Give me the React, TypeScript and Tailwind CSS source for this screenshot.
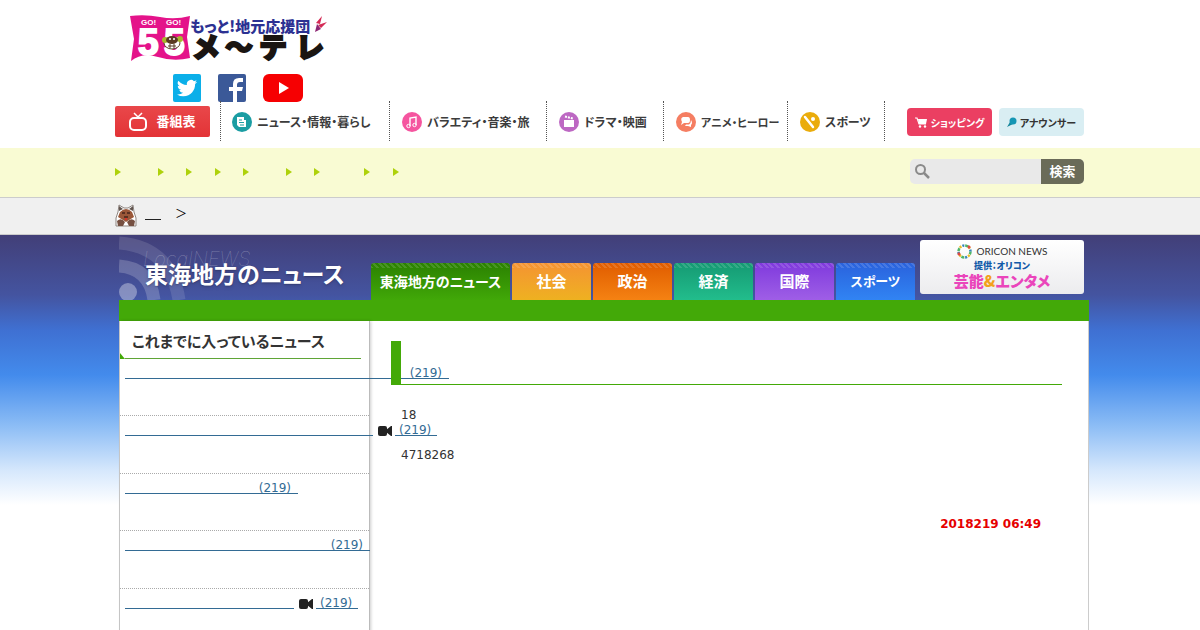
import { Fragment } from "react";

const tabs = [
  { label: "社会", className: "text-[15px] bg-linear-to-b from-[#f49331] to-[#eeb120]" },
  { label: "政治", className: "text-[15px] bg-linear-to-b from-[#e05c00] to-[#f58212]" },
  { label: "経済", className: "text-[15px] bg-linear-to-b from-[#159a73] to-[#22bd8c]" },
  { label: "国際", className: "text-[15px] bg-linear-to-b from-[#8039dd] to-[#9f5ee6]" },
  { label: "スポーツ", className: "text-[13px] bg-linear-to-b from-[#2a62dd] to-[#3184f3]" },
];

const arrows = [
  "w-[43px]",
  "w-[28px]",
  "w-[29px]",
  "w-[28px]",
  "w-[43px]",
  "w-[28px]",
  "w-[50px]",
  "w-[29px]",
  "w-[28px]",
];

const news = [
  { line: "w-[324px]", video: false },
  { line: "w-[248px]", video: true },
  { line: "w-[173px]", video: false },
  { line: "w-[245px]", video: false },
  { line: "w-[169px]", video: true },
];

function Logo() {
  return (
    <svg width="200" height="46" viewBox="0 0 200 46" className="overflow-visible" aria-label="メ〜テレ">
      <path d="M0 1 Q15 -1 30 2 T60 1 L57 22 L60 43 Q44 47 28 42 T1 46 L4 24 Z" fill="#e4138a" />
      <g fontFamily="Liberation Sans, sans-serif" fontWeight="bold" fill="#fff">
        <g fontSize="37" stroke="#fff" strokeWidth="2">
          <text x="8" y="40">5</text>
          <text x="34" y="40">5</text>
        </g>
        <text x="11" y="10" fontSize="8">GO!</text>
        <text x="36" y="10" fontSize="8">GO!</text>
      </g>
      <ellipse cx="42" cy="28" rx="8" ry="6" fill="#fff" stroke="#5b4025" />
      <circle cx="35" cy="25" r="3" fill="#a9b52d" />
      <circle cx="50" cy="24" r="3" fill="#a9b52d" />
      <ellipse cx="42" cy="25" rx="6" ry="4" fill="#5b3a22" />
      <circle cx="40" cy="24" r="1" fill="#fff" />
      <circle cx="44" cy="24" r="1" fill="#fff" />
      <path d="M38 31 h8 M40 29 v4 M44 29 v4" stroke="#5b3a22" />
      <g fontWeight="900" style={{ fontFamily: "'Noto Sans CJK JP', sans-serif" }}>
        <text x="60" y="17" fontSize="15" fill="#2c3192">
          もっと!地元応援団
        </text>
        <g fontSize="28" fill="#1a1512" stroke="#1a1512" strokeWidth="2" style={{ fontFeatureSettings: "normal" }}>
          <text x="62" y="43">メ</text>
          <text x="95" y="43">〜</text>
          <text x="129" y="43">テ</text>
          <text x="166" y="43">レ</text>
        </g>
      </g>
      <path d="M186 8 L192 1 L190 9 Z M188 10 L197 7 L191 13 Z" fill="#d42a55" />
      <path d="M185 17 L187 9 L191 14 Z" fill="#8d2673" />
    </svg>
  );
}

function Mascot() {
  return (
    <svg width="22" height="23" viewBox="0 0 22 23" aria-hidden="true">
      <path d="M3 8 L4 1 L9 4 H13 L18 1 L19 8 L21 14 V22 H1 V14 Z" fill="#fff" stroke="#8e8580" />
      <path d="M4 2 L8 5 L4 7 Z M18 2 L14 5 L18 7 Z" fill="#625650" />
      <path d="M5 8 Q11 2 17 8 L19 13 L14 16 L11 18 L8 16 L3 13 Z" fill="#9a5738" />
      <path d="M7 9 h3 M12 9 h3 M9 13 h4" stroke="#46251b" strokeWidth="1.5" />
      <path d="M2 17 Q6 13 10 18 L8 22 H3 Z M20 17 Q16 13 12 18 L14 22 H19 Z" fill="#765041" />
      <path d="M10 14 h2 v2 h-2 Z" fill="#d8342a" />
    </svg>
  );
}

function CategoryIcon({ name }: { name: string }) {
  return (
    <svg width="20" height="20" viewBox="0 0 20 20" className="shrink-0" aria-hidden="true">
      {name === "news" && (
        <>
          <circle cx="10" cy="10" r="10" fill="#1b9da3" />
          <path d="M5 5 H12 V8 H14 V15 H7 L5 13 Z" fill="#fff" />
          <path d="M7 8 h3 M7 10.5 h5 M8 13 h4" stroke="#1b9da3" />
        </>
      )}
      {name === "variety" && (
        <>
          <circle cx="10" cy="10" r="10" fill="#f5559f" />
          <path d="M8 14 V6 L14 5 V13" fill="none" stroke="#fff" strokeWidth="1.4" />
          <circle cx="6.5" cy="14" r="1.7" fill="none" stroke="#fff" />
          <circle cx="12.5" cy="13" r="1.7" fill="none" stroke="#fff" />
        </>
      )}
      {name === "drama" && (
        <>
          <circle cx="10" cy="10" r="10" fill="#bd68c3" />
          <path d="M5 8 H15 V15 H5 Z" fill="#fff" />
          <path d="M6 4.5 L14 6.5" stroke="#fff" strokeWidth="2" strokeDasharray="2 1" />
        </>
      )}
      {name === "anime" && (
        <>
          <circle cx="10" cy="10" r="10" fill="#f57e62" />
          <path d="M7 5 H12 Q14 5 14 8 Q14 11 12 11 H8 L5 13 L6 10 Q4 6 7 5 Z" fill="#fff" />
          <path d="M15 8 Q17 11 15 13 L15 15 L12 14 H9 L10 12.5 H13 Q15 11 15 8 Z" fill="#fff" />
        </>
      )}
      {name === "sports" && (
        <>
          <circle cx="10" cy="10" r="10" fill="#eaac0c" />
          <path d="M5 5 L13 15" stroke="#fff" strokeWidth="2.5" strokeLinecap="round" />
          <circle cx="13" cy="7" r="2" fill="#fff" />
        </>
      )}
    </svg>
  );
}

function NavItem({ icon, label, className }: { icon: string; label: string; className: string }) {
  return (
    <a
      href="#"
      className={`flex h-10 items-center gap-[5px] border-l border-dotted border-[#555] pt-[2px] font-bold whitespace-nowrap text-[#3c3c3c] ${className}`}
    >
      <CategoryIcon name={icon} />
      {label}
    </a>
  );
}

function VideoIcon() {
  return (
    <svg width="14" height="10" viewBox="0 0 14 10" className="mr-[3px] ml-[5px] block shrink-0" aria-hidden="true">
      <rect width="9" height="10" rx="2" fill="#222" />
      <path d="M8 4 L13 0 H14 V10 H13 L8 6 Z" fill="#222" />
    </svg>
  );
}

function Header() {
  return (
    <header className="mx-auto w-full max-w-[970px] pt-[15px] pb-[7px]">
      <a href="#" className="block pl-[15px]">
        <Logo />
      </a>
      <div className="mt-[13px] flex h-7 pl-[58px]">
        <a href="#" aria-label="Twitter" className="mr-[17px]">
          <svg width="28" height="28" viewBox="0 0 28 28">
            <rect width="28" height="28" rx="2" fill="#0bafe9" />
            <path
              transform="translate(4 4) scale(.84)"
              fill="#fff"
              d="M23.95 4.57a10 10 0 01-2.820.770 4.960 4.960 0 002.160-2.720c-.950.560-2 .960-3.130 1.180a4.920 4.920 0 00-8.380 4.480A13.930 13.930 0 011.640 3.160a4.920 4.920 0 001.520 6.570 4.900 4.900 0 01-2.230-.610v.060a4.920 4.920 0 003.950 4.830 5 5 0 01-2.210.080 4.940 4.940 0 004.600 3.420A9.870 9.870 0 010 19.540a14 14 0 007.550 2.210c9.050 0 14-7.500 14-13.990v-.630A9.940 9.940 0 0024 4.590z"
            />
          </svg>
        </a>
        <a href="#" aria-label="Facebook" className="mr-[17px]">
          <svg width="28" height="28" viewBox="0 0 28 28">
            <rect width="28" height="28" rx="2" fill="#3b5998" />
            <path d="M15 28 V17 H11 V13 H15 V10 Q15 4 21 4 H25 V8 H22 Q19 8 19 11 V13 H25 L24 17 H19 V28 Z" fill="#fff" />
          </svg>
        </a>
        <a href="#" aria-label="YouTube">
          <svg width="40" height="28" viewBox="0 0 40 28">
            <rect width="40" height="28" rx="6" fill="#f60002" />
            <path d="M16 8 L26 14 L16 20 Z" fill="#fff" />
          </svg>
        </a>
      </div>
      <nav className="-mt-px flex h-10 items-center">
        <a
          href="#"
          className="mr-[10px] flex h-[31px] w-[95px] items-center justify-center gap-[9px] rounded-xs bg-linear-to-b from-[#e9474a] to-[#e33336] text-[13px] font-bold text-white"
        >
          <svg width="18" height="19" viewBox="0 0 18 19" fill="none" stroke="#fff" aria-hidden="true">
            <rect x="1" y="6" width="16" height="12" rx="4" strokeWidth="2" />
            <path d="M5 1 L9 5 L13 1" strokeWidth="1.5" />
          </svg>
          番組表
        </a>
        <NavItem icon="news" label="ニュース・情報・暮らし" className="w-[169px] pl-[11px] text-xs" />
        <NavItem icon="variety" label="バラエティ・音楽・旅" className="w-[157px] pl-3 text-xs" />
        <NavItem icon="drama" label="ドラマ・映画" className="w-[117px] pl-3 text-xs" />
        <NavItem icon="anime" label="アニメ・ヒーロー" className="w-[124px] pl-3 text-[11px]" />
        <NavItem icon="sports" label="スポーツ" className="w-[98px] border-r pl-3 text-xs" />
        <div className="ml-auto flex gap-[7px] pt-[2px] pr-px text-[10px] font-bold whitespace-nowrap">
          <a href="#" className="flex h-7 w-[85px] items-center justify-center gap-1 rounded bg-[#eb3f62] text-white">
            <svg width="12" height="11" viewBox="0 0 12 11" aria-hidden="true">
              <path d="M0 1 H2 L4 7 H11" fill="none" stroke="#fff" strokeWidth="1.2" />
              <path d="M3 2 H12 L11 7 H4 Z" fill="#fff" />
              <circle cx="5" cy="9.5" r="1.2" fill="#fff" />
              <circle cx="10" cy="9.5" r="1.2" fill="#fff" />
            </svg>
            ショッピング
          </a>
          <a href="#" className="flex h-7 w-[85px] items-center justify-center gap-[3px] rounded bg-[#d9eef3] text-[#333]">
            <svg width="10" height="10" viewBox="0 0 10 10" aria-hidden="true">
              <path d="M0 10 L3 5 L6 7 Z" fill="#16869b" />
              <circle cx="6" cy="4" r="3.5" fill="#1596b4" />
            </svg>
            アナウンサー
          </a>
        </div>
      </nav>
    </header>
  );
}

function SubNav() {
  return (
    <div className="bg-[#f9fbd3]">
      <div className="mx-auto flex h-[49px] max-w-[970px] items-center justify-between pr-px pb-[2px]">
        <ul className="flex">
          {arrows.map((width, i) => (
            <li key={i} className={width}>
              <a href="#" aria-label={`メニュー${i + 1}`} className="block">
                <svg width="6" height="8" viewBox="0 0 6 8">
                  <path d="M0 0 L6 4 L0 8 Z" fill="#aed10b" />
                </svg>
              </a>
            </li>
          ))}
        </ul>
        <form className="flex h-[25px] w-[174px] overflow-hidden rounded-[5px] bg-[#e9e9e9]">
          <label htmlFor="search" className="flex items-center pl-[5px]">
            <svg width="15" height="15" viewBox="0 0 15 15" fill="none" stroke="#8a8a8a" aria-label="検索ワード">
              <circle cx="5.5" cy="5.5" r="4.5" strokeWidth="2" />
              <path d="M9 9 L14 14" strokeWidth="2.5" />
            </svg>
          </label>
          <input id="search" type="text" className="min-w-0 flex-1 px-1 text-xs outline-none" />
          <button type="button" className="w-[43px] bg-[#6a6b58] pb-[2px] text-[13px] font-bold text-white">
            検索
          </button>
        </form>
      </div>
    </div>
  );
}

function Breadcrumb() {
  return (
    <div className="border-y border-[#ccc] bg-[#f0f0f0]">
      <div className="mx-auto flex h-9 max-w-[970px] items-center pb-[2px] text-xs">
        <Mascot />
        <a href="#" aria-label="ホーム" className="mt-2 ml-2 w-4 border-b border-[#222]" />
        <span className="mb-1 ml-[14px] text-black">＞</span>
      </div>
    </div>
  );
}

function NewsHeader() {
  return (
    <div className="flex h-[65px]">
      <div className="relative w-[252px] shrink-0">
        <svg width="90" height="65" viewBox="0 0 90 65" className="absolute top-0 left-0" aria-hidden="true">
          <circle cx="9" cy="57" r="9" fill="#fff" opacity=".35" />
          <path d="M0 31 Q31 33 35 65" fill="none" stroke="#fff" strokeWidth="13" opacity=".2" />
          <path d="M0 8 Q52 12 60 65" fill="none" stroke="#fff" strokeWidth="13" opacity=".12" />
        </svg>
        <span className="absolute top-[14px] left-[24px] font-[Inter] text-[20px] leading-5 font-thin text-white/30 italic">
          LocalNEWS
        </span>
        <h1 className="relative pt-[23px] pl-[26px] text-[23px] leading-[30px] font-bold whitespace-nowrap text-white text-shadow-md">
          東海地方のニュース
        </h1>
      </div>
      <nav className="flex items-end gap-[2px] font-bold whitespace-nowrap text-white">
        <a
          href="#"
          className="flex h-[37px] w-[139px] flex-col overflow-hidden rounded-t-[3px] bg-linear-to-b from-[#2b8102] to-[#41a808] text-center text-[14px] leading-[26px]"
        >
          <span className="h-[5px] bg-[repeating-linear-gradient(45deg,#ffffff22_0_2px,transparent_2px_4px)]" />
          東海地方のニュース
        </a>
        {tabs.map((tab) => (
          <a
            key={tab.label}
            href="#"
            className={`flex h-[37px] w-[79px] flex-col overflow-hidden rounded-t-[3px] text-center leading-[26px] ${tab.className}`}
          >
            <span className="h-[5px] bg-[repeating-linear-gradient(45deg,#ffffff22_0_2px,transparent_2px_4px)]" />
            {tab.label}
          </a>
        ))}
      </nav>
      <a
        href="#"
        className="mt-[5px] mr-[5px] ml-auto flex h-[54px] w-[164px] flex-col items-center rounded-[3px] bg-linear-to-b from-white to-[#ececee] pt-[3px] font-black whitespace-nowrap"
      >
        <span className="flex items-center gap-[5px] font-[Lato] text-[10px] leading-4 font-normal text-[#333]">
          <svg width="15" height="15" viewBox="0 0 15 15" fill="none" strokeWidth="2.5" aria-hidden="true">
            <circle cx="7.5" cy="7.5" r="6" stroke="#4eb568" strokeDasharray="3 6.42" />
            <circle cx="7.5" cy="7.5" r="6" stroke="#e9bd28" strokeDasharray="2 7.42" strokeDashoffset="-3.5" />
            <circle cx="7.5" cy="7.5" r="6" stroke="#3284b6" strokeDasharray="2 7.42" strokeDashoffset="-6.5" />
            <path d="M1 9 l2 2 M11 2 l2 2" stroke="#dc4a44" />
          </svg>
          ORICON NEWS
        </span>
        <span className="text-[9px] leading-[14px] text-[#125ba9]">提供：オリコン</span>
        <span className="text-[15px] leading-4 text-[#ea45bb]">
          芸能<span className="text-[#f3a11c]">&amp;</span>エンタメ
        </span>
      </a>
    </div>
  );
}

function Sidebar() {
  return (
    <aside className="w-[250px] shrink-0 border-r border-[#bbb] shadow-[1px_0_3px_#00000033]">
      <div className="flex h-[38px] items-end">
        <svg width="5" height="6" viewBox="0 0 5 6" aria-hidden="true">
          <path d="M0 0 L5 6 H0 Z" fill="#43a908" />
        </svg>
        <h2 className="h-full w-[236px] border-b border-[#5fa536] pl-[7px] text-[15px] leading-10 font-bold whitespace-nowrap text-[#333]">
          これまでに入っているニュース
        </h2>
      </div>
      <ul>
        {news.map((item, i) => (
          <li
            key={i}
            className="border-b border-dotted border-[#aaa] pt-[6px] pl-[5px] odd:h-[57px] even:h-[58px] last:h-[30px] last:border-b-0"
          >
            <a href="#" className="flex h-[14px] items-end font-['DejaVu_Sans'] text-xs leading-4 text-[#336b94]">
              {item.video ? (
                <Fragment>
                  <span className={`h-[14px] shrink-0 border-b border-[#336b94] ${item.line}`} />
                  <VideoIcon />
                  <span className="h-[14px] w-[42px] shrink-0 border-b border-[#336b94] pl-1">(219)</span>
                </Fragment>
              ) : (
                <span className={`h-[14px] shrink-0 border-b border-[#336b94] pr-[7px] text-right ${item.line}`}>
                  (219)
                </span>
              )}
            </a>
          </li>
        ))}
      </ul>
    </aside>
  );
}

function Article() {
  return (
    <article className="relative min-w-0 flex-1 pt-5 pr-[26px] pl-[21px] font-['DejaVu_Sans'] text-xs leading-[14px] text-[#333]">
      <div className="flex h-11 border-b border-[#43a908]">
        <span className="-mb-px w-[10px] bg-[#43a908]" />
      </div>
      <div className="px-[10px]">
        <p className="mt-[23px]">18</p>
        <p className="mt-[26px]">4718268</p>
        <p className="mt-[55px] pr-[11px] text-right font-bold text-[#e60000]">2018219 06:49</p>
      </div>
    </article>
  );
}

export default function App() {
  return (
    <div className="flex min-h-screen flex-col bg-white font-['Noto_Sans_CJK_JP',sans-serif] [font-feature-settings:'palt']">
      <Header />
      <SubNav />
      <Breadcrumb />
      <main className="flex flex-1 flex-col bg-[linear-gradient(to_bottom,#423f78_0px,#4454a0_60px,#3f70d2_95px,#438bec_140px,#8bbcf5_190px,#d5e7fc_235px,#fff_270px)]">
        <div className="mx-auto flex w-full max-w-[978px] flex-1 flex-col pl-2">
          <NewsHeader />
          <div className="h-[21px] bg-[#43a908]" />
          <div className="flex flex-1 border-x border-[#ccc] bg-white">
            <Sidebar />
            <Article />
          </div>
        </div>
      </main>
    </div>
  );
}
